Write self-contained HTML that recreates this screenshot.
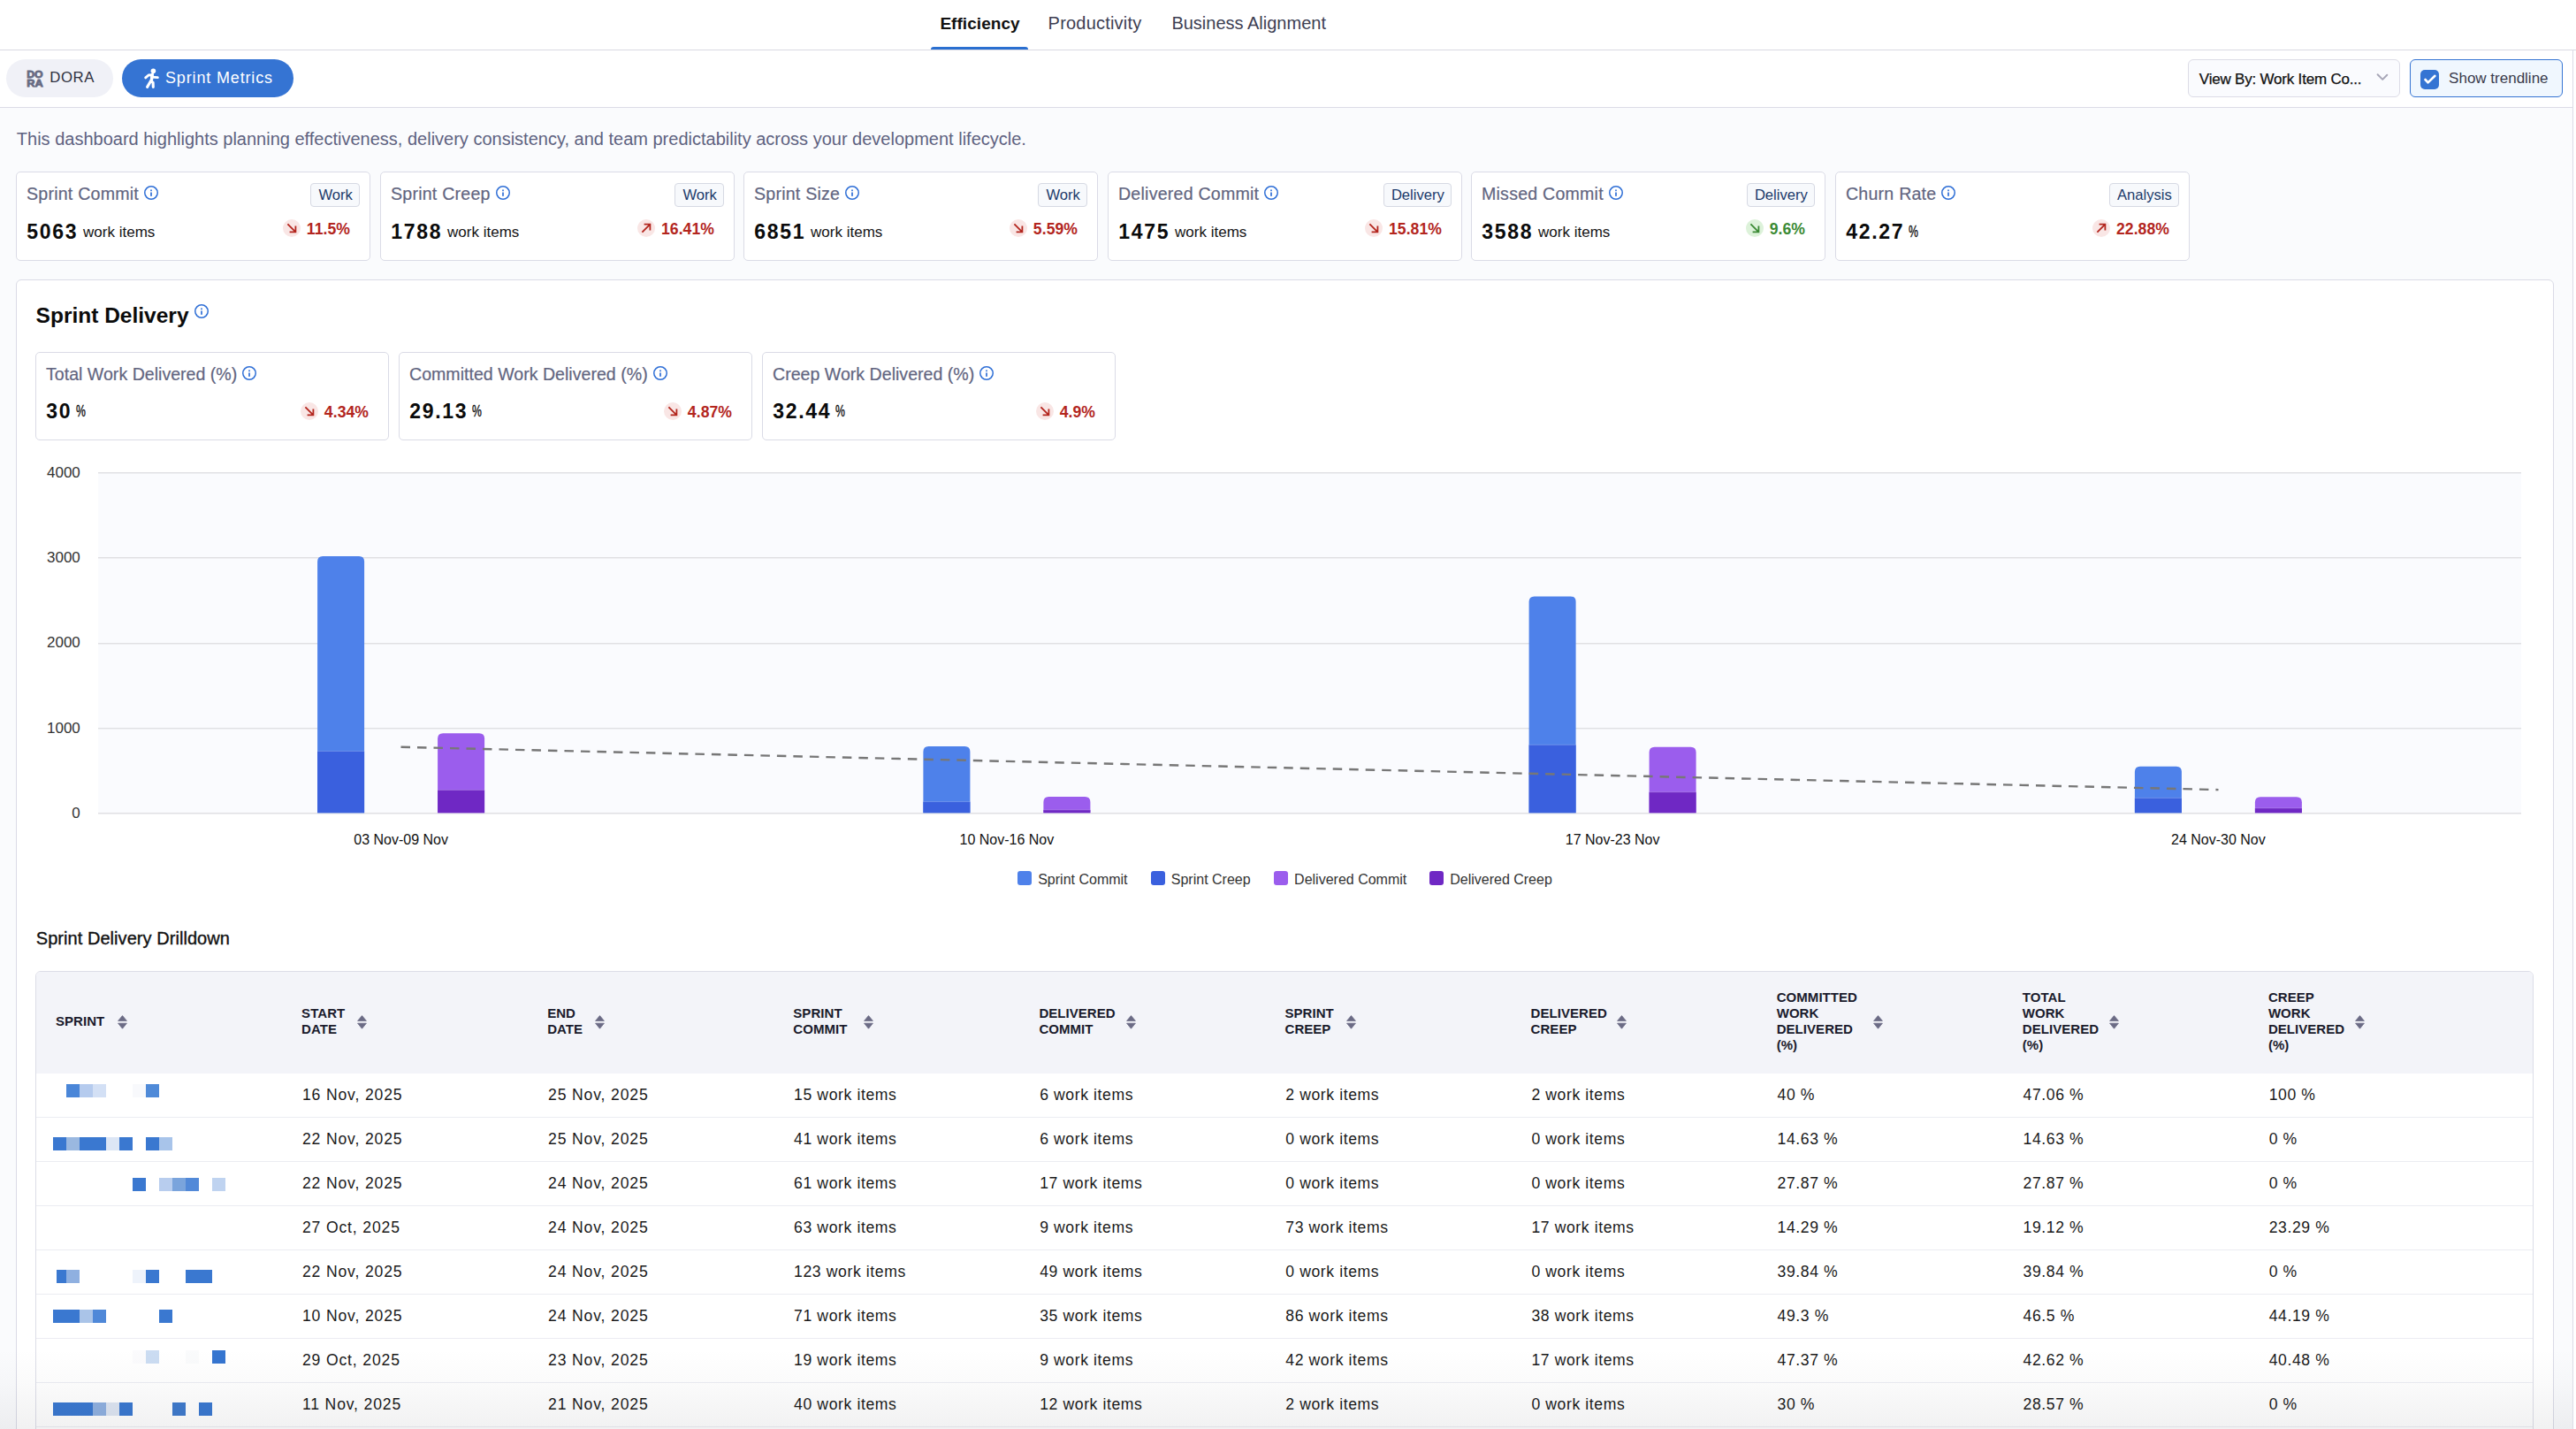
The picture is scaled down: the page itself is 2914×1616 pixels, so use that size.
<!DOCTYPE html>
<html><head><meta charset="utf-8"><style>
html,body{margin:0;padding:0;}
body{width:2914px;height:1616px;position:relative;overflow:hidden;background:#fafbfd;font-family:"Liberation Sans",sans-serif;}
.t{position:absolute;white-space:pre;}
.r{position:absolute;box-sizing:border-box;}
svg{position:absolute;overflow:visible;}
.ln{position:absolute;white-space:pre;}
.ln svg{position:relative;display:inline-block;vertical-align:baseline;}
</style></head><body>
<div class="r" style="left:0px;top:0px;width:2914px;height:56px;background:#fff"></div>
<div class="r" style="left:0px;top:56px;width:2914px;height:1px;background:#d9d9e3"></div>
<div class="t" style="left:1063.4px;top:17.2px;font-size:19px;line-height:19px;font-weight:700;color:#111111;letter-spacing:0.05px;">Efficiency</div>
<div class="t" style="left:1185.6px;top:16.4px;font-size:20px;line-height:20px;font-weight:400;color:#3d3e52;letter-spacing:0.2px;">Productivity</div>
<div class="t" style="left:1325.4px;top:16.4px;font-size:20px;line-height:20px;font-weight:400;color:#3d3e52;letter-spacing:0px;">Business Alignment</div>
<div class="r" style="left:1053px;top:53px;width:110px;height:3px;background:#2a6fd0;border-radius:3px 3px 0 0"></div>
<div class="r" style="left:0px;top:57px;width:2910px;height:64px;background:#fff"></div>
<div class="r" style="left:0px;top:121px;width:2910px;height:1px;background:#dcdce6"></div>
<div class="r" style="left:2910px;top:56px;width:1px;height:1560px;background:#dcdce6"></div>
<div class="r" style="left:2911px;top:57px;width:3px;height:1559px;background:#fff"></div>
<div class="r" style="left:7px;top:67px;width:121px;height:43px;background:#f0f1f7;border-radius:22px"></div>
<svg style="left:29px;top:78px" width="21" height="21" viewBox="0 0 21 21"><g font-family="Liberation Sans" font-weight="700" fill="#676a82" stroke="#676a82" stroke-width="0.8"><text x="1.2" y="10.2" font-size="11.5" textLength="18.5" lengthAdjust="spacingAndGlyphs">DO</text><text x="1.2" y="19.6" font-size="11" textLength="18.5" lengthAdjust="spacingAndGlyphs">RA</text></g></svg>
<div class="t" style="left:56.2px;top:79.8px;font-size:16.8px;line-height:16.8px;font-weight:400;color:#2f3040;letter-spacing:0.6px;">DORA</div>
<div class="r" style="left:138px;top:67px;width:194px;height:43px;background:#3574d3;border-radius:22px"></div>
<svg style="left:158px;top:74px" width="30" height="30" viewBox="0 0 30 30"><g fill="none" stroke="#fff" stroke-linecap="round" stroke-linejoin="round"><path d="M14.4 10.2 L13.1 18.4" stroke-width="3.4"/><path d="M14.2 10.6 L10 11 L6.7 13.9" stroke-width="2.9"/><path d="M13.6 13.2 L20.4 13.6" stroke-width="2.8"/><path d="M12.6 17.6 L8.6 24.4" stroke-width="3.1"/><path d="M13.2 18 L15.1 19.2 L15.3 24.4" stroke-width="3.1"/></g><circle cx="15.4" cy="6.3" r="2.8" fill="#fff"/></svg>
<div class="t" style="left:187.0px;top:78.8px;font-size:18px;line-height:18px;font-weight:400;color:#ffffff;letter-spacing:0.85px;">Sprint Metrics</div>
<div class="r" style="left:2475px;top:67px;width:240px;height:43px;background:#fafbfe;border:1px solid #dcdce6;border-radius:6px"></div>
<div class="t" style="left:2487.8px;top:81.1px;font-size:17px;line-height:17px;font-weight:400;color:#111111;letter-spacing:-0.2px;-webkit-text-stroke:0.25px #111">View By: Work Item Co...</div>
<svg style="left:2686px;top:80px" width="18" height="14" viewBox="0 0 18 14"><path d="M3.6 4.3 L9.2 9.9 L14.3 4.7" fill="none" stroke="#a8a7b8" stroke-width="2" stroke-linecap="round" stroke-linejoin="round"/></svg>
<div class="r" style="left:2726px;top:67px;width:173px;height:43px;background:#f0f7fe;border:1.5px solid #3574d3;border-radius:6px"></div>
<div class="r" style="left:2738px;top:79px;width:21px;height:22px;background:#3574d3;border-radius:5px"></div>
<svg style="left:2738px;top:79px" width="21" height="22" viewBox="0 0 21 22"><path d="M5.5 11 L8.6 14.4 L16.4 6.8" fill="none" stroke="#fff" stroke-width="2.6" stroke-linecap="round" stroke-linejoin="round"/></svg>
<div class="t" style="left:2770.1px;top:79.8px;font-size:17px;line-height:17px;font-weight:400;color:#3a3b4c;letter-spacing:0px;">Show trendline</div>
<div class="t" style="left:18.8px;top:147.3px;font-size:20px;line-height:20px;font-weight:400;color:#5e6280;letter-spacing:0px;">This dashboard highlights planning effectiveness, delivery consistency, and team predictability across your development lifecycle.</div>
<div class="r" style="left:18px;top:194px;width:401px;height:101px;background:#fff;border:1px solid #dadbe6;border-radius:5px"></div>
<div class="ln" style="left:30.0px;top:197.4px;font-size:19.6px;line-height:44px;"><span style="color:#62657f;letter-spacing:0.22px;-webkit-text-stroke:0.2px #62657f">Sprint Commit</span><svg style="margin-left:6px;vertical-align:0.2px" width="16" height="16" viewBox="0 0 16 16"><circle cx="8.0" cy="8.0" r="7.25" fill="none" stroke="#2f6fd6" stroke-width="1.5"/><rect x="7.15" y="7.52" width="1.7" height="4.32" fill="#2f6fd6"/><rect x="7.15" y="4.48" width="1.7" height="1.7" fill="#2f6fd6"/></svg></div>
<div class="ln" style="left:30.3px;top:240.0px;font-size:23px;line-height:44px;"><span style="font-weight:700;color:#0b0b0b;letter-spacing:1.7px">5063</span><span style="font-size:17px;color:#141414;margin-left:5.8px;position:relative;top:-2.2px">work items</span></div>
<div class="ln" style="right:2518.0px;top:236.5px;font-size:17.6px;line-height:44px;"><svg style="position:relative;display:inline-block;vertical-align:-3.6px;margin-right:7px" width="20" height="20" viewBox="0 0 20 20"><circle cx="10" cy="10" r="10" fill="#f9e6e5"/><path d="M5.4 5.4 L14.4 14.4 M7.6 14.4 L14.4 14.4 L14.4 7.6" fill="none" stroke="#b3261e" stroke-width="1.8"/></svg><span style="font-weight:700;color:#b3261e;letter-spacing:0.05px">11.5%</span></div>
<div class="t" style="right:2506.7px;top:207.4px;height:27px;box-sizing:border-box;padding:0 7.5px 0 8px;border:1px solid #d6d9e3;border-radius:4px;background:#f7f9fc;font-size:16.6px;line-height:26px;color:#1b3a6b">Work</div>
<div class="r" style="left:430px;top:194px;width:401px;height:101px;background:#fff;border:1px solid #dadbe6;border-radius:5px"></div>
<div class="ln" style="left:442.0px;top:197.4px;font-size:19.6px;line-height:44px;"><span style="color:#62657f;letter-spacing:0.22px;-webkit-text-stroke:0.2px #62657f">Sprint Creep</span><svg style="margin-left:6px;vertical-align:0.2px" width="16" height="16" viewBox="0 0 16 16"><circle cx="8.0" cy="8.0" r="7.25" fill="none" stroke="#2f6fd6" stroke-width="1.5"/><rect x="7.15" y="7.52" width="1.7" height="4.32" fill="#2f6fd6"/><rect x="7.15" y="4.48" width="1.7" height="1.7" fill="#2f6fd6"/></svg></div>
<div class="ln" style="left:442.3px;top:240.0px;font-size:23px;line-height:44px;"><span style="font-weight:700;color:#0b0b0b;letter-spacing:1.7px">1788</span><span style="font-size:17px;color:#141414;margin-left:5.8px;position:relative;top:-2.2px">work items</span></div>
<div class="ln" style="right:2106.0px;top:236.5px;font-size:17.6px;line-height:44px;"><svg style="position:relative;display:inline-block;vertical-align:-3.6px;margin-right:7px" width="20" height="20" viewBox="0 0 20 20"><circle cx="10" cy="10" r="10" fill="#f9e6e5"/><path d="M5.4 14.6 L14.4 5.6 M7.6 5.6 L14.4 5.6 L14.4 12.4" fill="none" stroke="#b3261e" stroke-width="1.8"/></svg><span style="font-weight:700;color:#b3261e;letter-spacing:0.05px">16.41%</span></div>
<div class="t" style="right:2094.7px;top:207.4px;height:27px;box-sizing:border-box;padding:0 7.5px 0 8px;border:1px solid #d6d9e3;border-radius:4px;background:#f7f9fc;font-size:16.6px;line-height:26px;color:#1b3a6b">Work</div>
<div class="r" style="left:841px;top:194px;width:401px;height:101px;background:#fff;border:1px solid #dadbe6;border-radius:5px"></div>
<div class="ln" style="left:853.0px;top:197.4px;font-size:19.6px;line-height:44px;"><span style="color:#62657f;letter-spacing:0.22px;-webkit-text-stroke:0.2px #62657f">Sprint Size</span><svg style="margin-left:6px;vertical-align:0.2px" width="16" height="16" viewBox="0 0 16 16"><circle cx="8.0" cy="8.0" r="7.25" fill="none" stroke="#2f6fd6" stroke-width="1.5"/><rect x="7.15" y="7.52" width="1.7" height="4.32" fill="#2f6fd6"/><rect x="7.15" y="4.48" width="1.7" height="1.7" fill="#2f6fd6"/></svg></div>
<div class="ln" style="left:853.3px;top:240.0px;font-size:23px;line-height:44px;"><span style="font-weight:700;color:#0b0b0b;letter-spacing:1.7px">6851</span><span style="font-size:17px;color:#141414;margin-left:5.8px;position:relative;top:-2.2px">work items</span></div>
<div class="ln" style="right:1695.0px;top:236.5px;font-size:17.6px;line-height:44px;"><svg style="position:relative;display:inline-block;vertical-align:-3.6px;margin-right:7px" width="20" height="20" viewBox="0 0 20 20"><circle cx="10" cy="10" r="10" fill="#f9e6e5"/><path d="M5.4 5.4 L14.4 14.4 M7.6 14.4 L14.4 14.4 L14.4 7.6" fill="none" stroke="#b3261e" stroke-width="1.8"/></svg><span style="font-weight:700;color:#b3261e;letter-spacing:0.05px">5.59%</span></div>
<div class="t" style="right:1683.7px;top:207.4px;height:27px;box-sizing:border-box;padding:0 7.5px 0 8px;border:1px solid #d6d9e3;border-radius:4px;background:#f7f9fc;font-size:16.6px;line-height:26px;color:#1b3a6b">Work</div>
<div class="r" style="left:1253px;top:194px;width:401px;height:101px;background:#fff;border:1px solid #dadbe6;border-radius:5px"></div>
<div class="ln" style="left:1265.0px;top:197.4px;font-size:19.6px;line-height:44px;"><span style="color:#62657f;letter-spacing:0.22px;-webkit-text-stroke:0.2px #62657f">Delivered Commit</span><svg style="margin-left:6px;vertical-align:0.2px" width="16" height="16" viewBox="0 0 16 16"><circle cx="8.0" cy="8.0" r="7.25" fill="none" stroke="#2f6fd6" stroke-width="1.5"/><rect x="7.15" y="7.52" width="1.7" height="4.32" fill="#2f6fd6"/><rect x="7.15" y="4.48" width="1.7" height="1.7" fill="#2f6fd6"/></svg></div>
<div class="ln" style="left:1265.3px;top:240.0px;font-size:23px;line-height:44px;"><span style="font-weight:700;color:#0b0b0b;letter-spacing:1.7px">1475</span><span style="font-size:17px;color:#141414;margin-left:5.8px;position:relative;top:-2.2px">work items</span></div>
<div class="ln" style="right:1283.0px;top:236.5px;font-size:17.6px;line-height:44px;"><svg style="position:relative;display:inline-block;vertical-align:-3.6px;margin-right:7px" width="20" height="20" viewBox="0 0 20 20"><circle cx="10" cy="10" r="10" fill="#f9e6e5"/><path d="M5.4 5.4 L14.4 14.4 M7.6 14.4 L14.4 14.4 L14.4 7.6" fill="none" stroke="#b3261e" stroke-width="1.8"/></svg><span style="font-weight:700;color:#b3261e;letter-spacing:0.05px">15.81%</span></div>
<div class="t" style="right:1271.7px;top:207.4px;height:27px;box-sizing:border-box;padding:0 7.5px 0 8px;border:1px solid #d6d9e3;border-radius:4px;background:#f7f9fc;font-size:16.6px;line-height:26px;color:#1b3a6b">Delivery</div>
<div class="r" style="left:1664px;top:194px;width:401px;height:101px;background:#fff;border:1px solid #dadbe6;border-radius:5px"></div>
<div class="ln" style="left:1676.0px;top:197.4px;font-size:19.6px;line-height:44px;"><span style="color:#62657f;letter-spacing:0.22px;-webkit-text-stroke:0.2px #62657f">Missed Commit</span><svg style="margin-left:6px;vertical-align:0.2px" width="16" height="16" viewBox="0 0 16 16"><circle cx="8.0" cy="8.0" r="7.25" fill="none" stroke="#2f6fd6" stroke-width="1.5"/><rect x="7.15" y="7.52" width="1.7" height="4.32" fill="#2f6fd6"/><rect x="7.15" y="4.48" width="1.7" height="1.7" fill="#2f6fd6"/></svg></div>
<div class="ln" style="left:1676.3px;top:240.0px;font-size:23px;line-height:44px;"><span style="font-weight:700;color:#0b0b0b;letter-spacing:1.7px">3588</span><span style="font-size:17px;color:#141414;margin-left:5.8px;position:relative;top:-2.2px">work items</span></div>
<div class="ln" style="right:872.0px;top:236.5px;font-size:17.6px;line-height:44px;"><svg style="position:relative;display:inline-block;vertical-align:-3.6px;margin-right:7px" width="20" height="20" viewBox="0 0 20 20"><circle cx="10" cy="10" r="10" fill="#ddf2da"/><path d="M5.4 5.4 L14.4 14.4 M7.6 14.4 L14.4 14.4 L14.4 7.6" fill="none" stroke="#3b8a34" stroke-width="1.8"/></svg><span style="font-weight:700;color:#3b8a34;letter-spacing:0.05px">9.6%</span></div>
<div class="t" style="right:860.7px;top:207.4px;height:27px;box-sizing:border-box;padding:0 7.5px 0 8px;border:1px solid #d6d9e3;border-radius:4px;background:#f7f9fc;font-size:16.6px;line-height:26px;color:#1b3a6b">Delivery</div>
<div class="r" style="left:2076px;top:194px;width:401px;height:101px;background:#fff;border:1px solid #dadbe6;border-radius:5px"></div>
<div class="ln" style="left:2088.0px;top:197.4px;font-size:19.6px;line-height:44px;"><span style="color:#62657f;letter-spacing:0.22px;-webkit-text-stroke:0.2px #62657f">Churn Rate</span><svg style="margin-left:6px;vertical-align:0.2px" width="16" height="16" viewBox="0 0 16 16"><circle cx="8.0" cy="8.0" r="7.25" fill="none" stroke="#2f6fd6" stroke-width="1.5"/><rect x="7.15" y="7.52" width="1.7" height="4.32" fill="#2f6fd6"/><rect x="7.15" y="4.48" width="1.7" height="1.7" fill="#2f6fd6"/></svg></div>
<div class="ln" style="left:2088.3px;top:240.0px;font-size:23px;line-height:44px;"><span style="font-weight:700;color:#0b0b0b;letter-spacing:1.7px">42.27</span><span style="display:inline-block;font-size:18px;color:#0b0b0b;margin-left:5px;margin-right:-6px;transform:scaleX(0.68);transform-origin:0 0;position:relative;top:-1.6px;-webkit-text-stroke:0.35px #0b0b0b">%</span></div>
<div class="ln" style="right:460.0px;top:236.5px;font-size:17.6px;line-height:44px;"><svg style="position:relative;display:inline-block;vertical-align:-3.6px;margin-right:7px" width="20" height="20" viewBox="0 0 20 20"><circle cx="10" cy="10" r="10" fill="#f9e6e5"/><path d="M5.4 14.6 L14.4 5.6 M7.6 5.6 L14.4 5.6 L14.4 12.4" fill="none" stroke="#b3261e" stroke-width="1.8"/></svg><span style="font-weight:700;color:#b3261e;letter-spacing:0.05px">22.88%</span></div>
<div class="t" style="right:448.7px;top:207.4px;height:27px;box-sizing:border-box;padding:0 7.5px 0 8px;border:1px solid #d6d9e3;border-radius:4px;background:#f7f9fc;font-size:16.6px;line-height:26px;color:#1b3a6b">Analysis</div>
<div class="r" style="left:18px;top:316px;width:2871px;height:1400px;background:#fff;border:1px solid #dadbe6;border-radius:6px"></div>
<div class="t" style="left:40.6px;top:345.4px;font-size:24.5px;line-height:24.5px;font-weight:700;color:#0b0b0b;letter-spacing:0px;">Sprint Delivery</div>
<svg style="left:220.2px;top:344px" width="16" height="16" viewBox="0 0 16 16"><circle cx="8.0" cy="8.0" r="7.25" fill="none" stroke="#2f6fd6" stroke-width="1.5"/><rect x="7.15" y="7.52" width="1.7" height="4.32" fill="#2f6fd6"/><rect x="7.15" y="4.48" width="1.7" height="1.7" fill="#2f6fd6"/></svg>
<div class="r" style="left:40px;top:398px;width:400px;height:100px;background:#fff;border:1px solid #dadbe6;border-radius:5px"></div>
<div class="ln" style="left:52.0px;top:401.2px;font-size:19.6px;line-height:44px;"><span style="color:#62657f;letter-spacing:0px;-webkit-text-stroke:0.2px #62657f">Total Work Delivered (%)</span><svg style="margin-left:6px;vertical-align:0.2px" width="16" height="16" viewBox="0 0 16 16"><circle cx="8.0" cy="8.0" r="7.25" fill="none" stroke="#2f6fd6" stroke-width="1.5"/><rect x="7.15" y="7.52" width="1.7" height="4.32" fill="#2f6fd6"/><rect x="7.15" y="4.48" width="1.7" height="1.7" fill="#2f6fd6"/></svg></div>
<div class="ln" style="left:52.3px;top:443.0px;font-size:23px;line-height:44px;"><span style="font-weight:700;color:#0b0b0b;letter-spacing:1.7px">30</span><span style="display:inline-block;font-size:18px;color:#0b0b0b;margin-left:5px;margin-right:-6px;transform:scaleX(0.68);transform-origin:0 0;position:relative;top:-1.6px;-webkit-text-stroke:0.35px #0b0b0b">%</span></div>
<div class="ln" style="right:2497.0px;top:443.6px;font-size:17.6px;line-height:44px;"><svg style="position:relative;display:inline-block;vertical-align:-3.6px;margin-right:7px" width="20" height="20" viewBox="0 0 20 20"><circle cx="10" cy="10" r="10" fill="#f9e6e5"/><path d="M5.4 5.4 L14.4 14.4 M7.6 14.4 L14.4 14.4 L14.4 7.6" fill="none" stroke="#b3261e" stroke-width="1.8"/></svg><span style="font-weight:700;color:#b3261e;letter-spacing:0.05px">4.34%</span></div>
<div class="r" style="left:451px;top:398px;width:400px;height:100px;background:#fff;border:1px solid #dadbe6;border-radius:5px"></div>
<div class="ln" style="left:463.0px;top:401.2px;font-size:19.6px;line-height:44px;"><span style="color:#62657f;letter-spacing:0px;-webkit-text-stroke:0.2px #62657f">Committed Work Delivered (%)</span><svg style="margin-left:6px;vertical-align:0.2px" width="16" height="16" viewBox="0 0 16 16"><circle cx="8.0" cy="8.0" r="7.25" fill="none" stroke="#2f6fd6" stroke-width="1.5"/><rect x="7.15" y="7.52" width="1.7" height="4.32" fill="#2f6fd6"/><rect x="7.15" y="4.48" width="1.7" height="1.7" fill="#2f6fd6"/></svg></div>
<div class="ln" style="left:463.3px;top:443.0px;font-size:23px;line-height:44px;"><span style="font-weight:700;color:#0b0b0b;letter-spacing:1.7px">29.13</span><span style="display:inline-block;font-size:18px;color:#0b0b0b;margin-left:5px;margin-right:-6px;transform:scaleX(0.68);transform-origin:0 0;position:relative;top:-1.6px;-webkit-text-stroke:0.35px #0b0b0b">%</span></div>
<div class="ln" style="right:2086.0px;top:443.6px;font-size:17.6px;line-height:44px;"><svg style="position:relative;display:inline-block;vertical-align:-3.6px;margin-right:7px" width="20" height="20" viewBox="0 0 20 20"><circle cx="10" cy="10" r="10" fill="#f9e6e5"/><path d="M5.4 5.4 L14.4 14.4 M7.6 14.4 L14.4 14.4 L14.4 7.6" fill="none" stroke="#b3261e" stroke-width="1.8"/></svg><span style="font-weight:700;color:#b3261e;letter-spacing:0.05px">4.87%</span></div>
<div class="r" style="left:862px;top:398px;width:400px;height:100px;background:#fff;border:1px solid #dadbe6;border-radius:5px"></div>
<div class="ln" style="left:874.0px;top:401.2px;font-size:19.6px;line-height:44px;"><span style="color:#62657f;letter-spacing:0px;-webkit-text-stroke:0.2px #62657f">Creep Work Delivered (%)</span><svg style="margin-left:6px;vertical-align:0.2px" width="16" height="16" viewBox="0 0 16 16"><circle cx="8.0" cy="8.0" r="7.25" fill="none" stroke="#2f6fd6" stroke-width="1.5"/><rect x="7.15" y="7.52" width="1.7" height="4.32" fill="#2f6fd6"/><rect x="7.15" y="4.48" width="1.7" height="1.7" fill="#2f6fd6"/></svg></div>
<div class="ln" style="left:874.3px;top:443.0px;font-size:23px;line-height:44px;"><span style="font-weight:700;color:#0b0b0b;letter-spacing:1.7px">32.44</span><span style="display:inline-block;font-size:18px;color:#0b0b0b;margin-left:5px;margin-right:-6px;transform:scaleX(0.68);transform-origin:0 0;position:relative;top:-1.6px;-webkit-text-stroke:0.35px #0b0b0b">%</span></div>
<div class="ln" style="right:1675.0px;top:443.6px;font-size:17.6px;line-height:44px;"><svg style="position:relative;display:inline-block;vertical-align:-3.6px;margin-right:7px" width="20" height="20" viewBox="0 0 20 20"><circle cx="10" cy="10" r="10" fill="#f9e6e5"/><path d="M5.4 5.4 L14.4 14.4 M7.6 14.4 L14.4 14.4 L14.4 7.6" fill="none" stroke="#b3261e" stroke-width="1.8"/></svg><span style="font-weight:700;color:#b3261e;letter-spacing:0.05px">4.9%</span></div>
<div class="r" style="left:111px;top:534px;width:2741px;height:386px;background:#fafbfe"></div>
<div class="r" style="left:111px;top:919px;width:2741px;height:1px;background:#e0e0e3"></div>
<div class="r" style="left:111px;top:920px;width:2741px;height:1px;background:#eeeff2"></div>
<div class="t" style="right:2823.2px;top:911.2px;font-size:17px;line-height:17px;font-weight:400;color:#333333;letter-spacing:0px;">0</div>
<div class="r" style="left:111px;top:823px;width:2741px;height:1px;background:#e0e0e3"></div>
<div class="r" style="left:111px;top:824px;width:2741px;height:1px;background:#eeeff2"></div>
<div class="t" style="right:2823.2px;top:814.8px;font-size:17px;line-height:17px;font-weight:400;color:#333333;letter-spacing:0px;">1000</div>
<div class="r" style="left:111px;top:727px;width:2741px;height:1px;background:#e0e0e3"></div>
<div class="r" style="left:111px;top:728px;width:2741px;height:1px;background:#eeeff2"></div>
<div class="t" style="right:2823.2px;top:718.4px;font-size:17px;line-height:17px;font-weight:400;color:#333333;letter-spacing:0px;">2000</div>
<div class="r" style="left:111px;top:630px;width:2741px;height:1px;background:#e0e0e3"></div>
<div class="r" style="left:111px;top:631px;width:2741px;height:1px;background:#eeeff2"></div>
<div class="t" style="right:2823.2px;top:621.9px;font-size:17px;line-height:17px;font-weight:400;color:#333333;letter-spacing:0px;">3000</div>
<div class="r" style="left:111px;top:534px;width:2741px;height:1px;background:#e0e0e3"></div>
<div class="r" style="left:111px;top:535px;width:2741px;height:1px;background:#eeeff2"></div>
<div class="t" style="right:2823.2px;top:525.5px;font-size:17px;line-height:17px;font-weight:400;color:#333333;letter-spacing:0px;">4000</div>
<div class="t" style="left:453.6px;top:941.9px;font-size:16px;line-height:16px;font-weight:400;color:#111111;letter-spacing:0px;transform:translateX(-50%)">03 Nov-09 Nov</div>
<div class="t" style="left:1138.9px;top:941.9px;font-size:16px;line-height:16px;font-weight:400;color:#111111;letter-spacing:0px;transform:translateX(-50%)">10 Nov-16 Nov</div>
<div class="t" style="left:1824.1px;top:941.9px;font-size:16px;line-height:16px;font-weight:400;color:#111111;letter-spacing:0px;transform:translateX(-50%)">17 Nov-23 Nov</div>
<div class="t" style="left:2509.4px;top:941.9px;font-size:16px;line-height:16px;font-weight:400;color:#111111;letter-spacing:0px;transform:translateX(-50%)">24 Nov-30 Nov</div>
<svg style="left:0;top:0" width="2914" height="1616"><path d="M359.1 919.2 L359.1 635.0 Q359.1 629.0 365.1 629.0 L406.1 629.0 Q412.1 629.0 412.1 635.0 L412.1 919.2 Z" fill="#4e81ea"/><rect x="359.1" y="849.4" width="53" height="69.8" fill="#3a60de"/><rect x="359.1" y="848.9" width="53" height="1" fill="#ffffff" fill-opacity="0.22"/><path d="M495.1 919.2 L495.1 835.2 Q495.1 829.2 501.1 829.2 L542.1 829.2 Q548.1 829.2 548.1 835.2 L548.1 919.2 Z" fill="#9b5ded"/><rect x="495.1" y="893.4" width="53" height="25.8" fill="#6f28c4"/><rect x="495.1" y="892.9" width="53" height="1" fill="#ffffff" fill-opacity="0.22"/><path d="M1044.4 919.2 L1044.4 850.0 Q1044.4 844.0 1050.4 844.0 L1091.4 844.0 Q1097.4 844.0 1097.4 850.0 L1097.4 919.2 Z" fill="#4e81ea"/><rect x="1044.4" y="906.6" width="53" height="12.6" fill="#3a60de"/><rect x="1044.4" y="906.1" width="53" height="1" fill="#ffffff" fill-opacity="0.22"/><path d="M1180.4 919.2 L1180.4 907.0 Q1180.4 901.0 1186.4 901.0 L1227.4 901.0 Q1233.4 901.0 1233.4 907.0 L1233.4 919.2 Z" fill="#9b5ded"/><rect x="1180.4" y="915.9" width="53" height="3.3" fill="#6f28c4"/><rect x="1180.4" y="915.4" width="53" height="1" fill="#ffffff" fill-opacity="0.22"/><path d="M1729.6 919.2 L1729.6 680.5 Q1729.6 674.5 1735.6 674.5 L1776.6 674.5 Q1782.6 674.5 1782.6 680.5 L1782.6 919.2 Z" fill="#4e81ea"/><rect x="1729.6" y="842.3" width="53" height="76.9" fill="#3a60de"/><rect x="1729.6" y="841.8" width="53" height="1" fill="#ffffff" fill-opacity="0.22"/><path d="M1865.6 919.2 L1865.6 850.7 Q1865.6 844.7 1871.6 844.7 L1912.6 844.7 Q1918.6 844.7 1918.6 850.7 L1918.6 919.2 Z" fill="#9b5ded"/><rect x="1865.6" y="895.7" width="53" height="23.5" fill="#6f28c4"/><rect x="1865.6" y="895.2" width="53" height="1" fill="#ffffff" fill-opacity="0.22"/><path d="M2414.9 919.2 L2414.9 872.8 Q2414.9 866.8 2420.9 866.8 L2461.9 866.8 Q2467.9 866.8 2467.9 872.8 L2467.9 919.2 Z" fill="#4e81ea"/><rect x="2414.9" y="902.4" width="53" height="16.8" fill="#3a60de"/><rect x="2414.9" y="901.9" width="53" height="1" fill="#ffffff" fill-opacity="0.22"/><path d="M2550.9 919.2 L2550.9 907.3 Q2550.9 901.3 2556.9 901.3 L2597.9 901.3 Q2603.9 901.3 2603.9 907.3 L2603.9 919.2 Z" fill="#9b5ded"/><rect x="2550.9" y="913.9" width="53" height="5.3" fill="#6f28c4"/><rect x="2550.9" y="913.4" width="53" height="1" fill="#ffffff" fill-opacity="0.22"/><line x1="453.5" y1="844.8" x2="2509.5" y2="893.1" stroke="#777" stroke-width="2.4" stroke-dasharray="10.5 8"/></svg>
<div class="r" style="left:1151px;top:985px;width:16px;height:16px;background:#4e81ea;border-radius:3px"></div>
<div class="t" style="left:1174.2px;top:987.1px;font-size:16px;line-height:16px;font-weight:400;color:#333333;letter-spacing:0px;">Sprint Commit</div>
<div class="r" style="left:1302px;top:985px;width:16px;height:16px;background:#3a60de;border-radius:3px"></div>
<div class="t" style="left:1324.8px;top:987.1px;font-size:16px;line-height:16px;font-weight:400;color:#333333;letter-spacing:0px;">Sprint Creep</div>
<div class="r" style="left:1441px;top:985px;width:16px;height:16px;background:#9b5ded;border-radius:3px"></div>
<div class="t" style="left:1464.1px;top:987.1px;font-size:16px;line-height:16px;font-weight:400;color:#333333;letter-spacing:0px;">Delivered Commit</div>
<div class="r" style="left:1617px;top:985px;width:16px;height:16px;background:#6f28c4;border-radius:3px"></div>
<div class="t" style="left:1640.2px;top:987.1px;font-size:16px;line-height:16px;font-weight:400;color:#333333;letter-spacing:0px;">Delivered Creep</div>
<div class="t" style="left:40.8px;top:1051.0px;font-size:20px;line-height:20px;font-weight:400;color:#111111;letter-spacing:0.05px;-webkit-text-stroke:0.35px #111">Sprint Delivery Drilldown</div>
<div class="r" style="left:40px;top:1098px;width:2826px;height:600px;background:#fff;border:1px solid #dcdde7;border-radius:6px 6px 0 0"></div>
<div class="r" style="left:41px;top:1099px;width:2824px;height:115px;background:#f3f4f9;border-radius:5px 5px 0 0"></div>
<div class="t" style="left:63.0px;top:1146.9px;font-size:15px;line-height:15px;font-weight:700;color:#1a1b2c;letter-spacing:0.05px;">SPRINT</div>
<svg style="left:132.6px;top:1148.0px" width="11" height="16" viewBox="0 0 11 16"><path d="M5.5 0.6 L10.4 6.4 L0.6 6.4 Z M0.6 9.2 L10.4 9.2 L5.5 15.2 Z" fill="#6b6b85" stroke="#6b6b85" stroke-width="0.8" stroke-linejoin="round"/></svg>
<div class="t" style="left:341.1px;top:1138.0px;font-size:15px;line-height:15px;font-weight:700;color:#1a1b2c;letter-spacing:0.05px;">START</div>
<div class="t" style="left:341.1px;top:1155.9px;font-size:15px;line-height:15px;font-weight:700;color:#1a1b2c;letter-spacing:0.05px;">DATE</div>
<svg style="left:404.3px;top:1148.0px" width="11" height="16" viewBox="0 0 11 16"><path d="M5.5 0.6 L10.4 6.4 L0.6 6.4 Z M0.6 9.2 L10.4 9.2 L5.5 15.2 Z" fill="#6b6b85" stroke="#6b6b85" stroke-width="0.8" stroke-linejoin="round"/></svg>
<div class="t" style="left:619.2px;top:1138.0px;font-size:15px;line-height:15px;font-weight:700;color:#1a1b2c;letter-spacing:0.05px;">END</div>
<div class="t" style="left:619.2px;top:1155.9px;font-size:15px;line-height:15px;font-weight:700;color:#1a1b2c;letter-spacing:0.05px;">DATE</div>
<svg style="left:673.4px;top:1148.0px" width="11" height="16" viewBox="0 0 11 16"><path d="M5.5 0.6 L10.4 6.4 L0.6 6.4 Z M0.6 9.2 L10.4 9.2 L5.5 15.2 Z" fill="#6b6b85" stroke="#6b6b85" stroke-width="0.8" stroke-linejoin="round"/></svg>
<div class="t" style="left:897.3px;top:1138.0px;font-size:15px;line-height:15px;font-weight:700;color:#1a1b2c;letter-spacing:0.05px;">SPRINT</div>
<div class="t" style="left:897.3px;top:1155.9px;font-size:15px;line-height:15px;font-weight:700;color:#1a1b2c;letter-spacing:0.05px;">COMMIT</div>
<svg style="left:977.0px;top:1148.0px" width="11" height="16" viewBox="0 0 11 16"><path d="M5.5 0.6 L10.4 6.4 L0.6 6.4 Z M0.6 9.2 L10.4 9.2 L5.5 15.2 Z" fill="#6b6b85" stroke="#6b6b85" stroke-width="0.8" stroke-linejoin="round"/></svg>
<div class="t" style="left:1175.4px;top:1138.0px;font-size:15px;line-height:15px;font-weight:700;color:#1a1b2c;letter-spacing:0.05px;">DELIVERED</div>
<div class="t" style="left:1175.4px;top:1155.9px;font-size:15px;line-height:15px;font-weight:700;color:#1a1b2c;letter-spacing:0.05px;">COMMIT</div>
<svg style="left:1273.8px;top:1148.0px" width="11" height="16" viewBox="0 0 11 16"><path d="M5.5 0.6 L10.4 6.4 L0.6 6.4 Z M0.6 9.2 L10.4 9.2 L5.5 15.2 Z" fill="#6b6b85" stroke="#6b6b85" stroke-width="0.8" stroke-linejoin="round"/></svg>
<div class="t" style="left:1453.5px;top:1138.0px;font-size:15px;line-height:15px;font-weight:700;color:#1a1b2c;letter-spacing:0.05px;">SPRINT</div>
<div class="t" style="left:1453.5px;top:1155.9px;font-size:15px;line-height:15px;font-weight:700;color:#1a1b2c;letter-spacing:0.05px;">CREEP</div>
<svg style="left:1523.3px;top:1148.0px" width="11" height="16" viewBox="0 0 11 16"><path d="M5.5 0.6 L10.4 6.4 L0.6 6.4 Z M0.6 9.2 L10.4 9.2 L5.5 15.2 Z" fill="#6b6b85" stroke="#6b6b85" stroke-width="0.8" stroke-linejoin="round"/></svg>
<div class="t" style="left:1731.6px;top:1138.0px;font-size:15px;line-height:15px;font-weight:700;color:#1a1b2c;letter-spacing:0.05px;">DELIVERED</div>
<div class="t" style="left:1731.6px;top:1155.9px;font-size:15px;line-height:15px;font-weight:700;color:#1a1b2c;letter-spacing:0.05px;">CREEP</div>
<svg style="left:1829.0px;top:1148.0px" width="11" height="16" viewBox="0 0 11 16"><path d="M5.5 0.6 L10.4 6.4 L0.6 6.4 Z M0.6 9.2 L10.4 9.2 L5.5 15.2 Z" fill="#6b6b85" stroke="#6b6b85" stroke-width="0.8" stroke-linejoin="round"/></svg>
<div class="t" style="left:2009.7px;top:1120.1px;font-size:15px;line-height:15px;font-weight:700;color:#1a1b2c;letter-spacing:0.05px;">COMMITTED</div>
<div class="t" style="left:2009.7px;top:1138.0px;font-size:15px;line-height:15px;font-weight:700;color:#1a1b2c;letter-spacing:0.05px;">WORK</div>
<div class="t" style="left:2009.7px;top:1155.9px;font-size:15px;line-height:15px;font-weight:700;color:#1a1b2c;letter-spacing:0.05px;">DELIVERED</div>
<div class="t" style="left:2009.7px;top:1173.8px;font-size:15px;line-height:15px;font-weight:700;color:#1a1b2c;letter-spacing:0.05px;">(%)</div>
<svg style="left:2119.0px;top:1148.0px" width="11" height="16" viewBox="0 0 11 16"><path d="M5.5 0.6 L10.4 6.4 L0.6 6.4 Z M0.6 9.2 L10.4 9.2 L5.5 15.2 Z" fill="#6b6b85" stroke="#6b6b85" stroke-width="0.8" stroke-linejoin="round"/></svg>
<div class="t" style="left:2287.8px;top:1120.1px;font-size:15px;line-height:15px;font-weight:700;color:#1a1b2c;letter-spacing:0.05px;">TOTAL</div>
<div class="t" style="left:2287.8px;top:1138.0px;font-size:15px;line-height:15px;font-weight:700;color:#1a1b2c;letter-spacing:0.05px;">WORK</div>
<div class="t" style="left:2287.8px;top:1155.9px;font-size:15px;line-height:15px;font-weight:700;color:#1a1b2c;letter-spacing:0.05px;">DELIVERED</div>
<div class="t" style="left:2287.8px;top:1173.8px;font-size:15px;line-height:15px;font-weight:700;color:#1a1b2c;letter-spacing:0.05px;">(%)</div>
<svg style="left:2386.0px;top:1148.0px" width="11" height="16" viewBox="0 0 11 16"><path d="M5.5 0.6 L10.4 6.4 L0.6 6.4 Z M0.6 9.2 L10.4 9.2 L5.5 15.2 Z" fill="#6b6b85" stroke="#6b6b85" stroke-width="0.8" stroke-linejoin="round"/></svg>
<div class="t" style="left:2565.9px;top:1120.1px;font-size:15px;line-height:15px;font-weight:700;color:#1a1b2c;letter-spacing:0.05px;">CREEP</div>
<div class="t" style="left:2565.9px;top:1138.0px;font-size:15px;line-height:15px;font-weight:700;color:#1a1b2c;letter-spacing:0.05px;">WORK</div>
<div class="t" style="left:2565.9px;top:1155.9px;font-size:15px;line-height:15px;font-weight:700;color:#1a1b2c;letter-spacing:0.05px;">DELIVERED</div>
<div class="t" style="left:2565.9px;top:1173.8px;font-size:15px;line-height:15px;font-weight:700;color:#1a1b2c;letter-spacing:0.05px;">(%)</div>
<svg style="left:2663.7px;top:1148.0px" width="11" height="16" viewBox="0 0 11 16"><path d="M5.5 0.6 L10.4 6.4 L0.6 6.4 Z M0.6 9.2 L10.4 9.2 L5.5 15.2 Z" fill="#6b6b85" stroke="#6b6b85" stroke-width="0.8" stroke-linejoin="round"/></svg>
<div class="r" style="left:41px;top:1263px;width:2824px;height:1px;background:#ebecf2"></div>
<div class="r" style="left:74.9px;top:1225.6px;width:15px;height:15px;background:#4a86d8"></div>
<div class="r" style="left:89.9px;top:1225.6px;width:15px;height:15px;background:#b5cbee"></div>
<div class="r" style="left:104.9px;top:1225.6px;width:15px;height:15px;background:#d3e0f5"></div>
<div class="r" style="left:149.9px;top:1225.6px;width:15px;height:15px;background:#f8f9fc"></div>
<div class="r" style="left:164.9px;top:1225.6px;width:15px;height:15px;background:#4f8ad8"></div>
<div class="t" style="left:341.9px;top:1230.1px;font-size:17.6px;line-height:17.6px;font-weight:400;color:#1a1a1a;letter-spacing:0.85px;">16 Nov, 2025</div>
<div class="t" style="left:620.0px;top:1230.1px;font-size:17.6px;line-height:17.6px;font-weight:400;color:#1a1a1a;letter-spacing:0.85px;">25 Nov, 2025</div>
<div class="t" style="left:898.1px;top:1230.1px;font-size:17.6px;line-height:17.6px;font-weight:400;color:#1a1a1a;letter-spacing:0.6px;">15 work items</div>
<div class="t" style="left:1176.2px;top:1230.1px;font-size:17.6px;line-height:17.6px;font-weight:400;color:#1a1a1a;letter-spacing:0.6px;">6 work items</div>
<div class="t" style="left:1454.3px;top:1230.1px;font-size:17.6px;line-height:17.6px;font-weight:400;color:#1a1a1a;letter-spacing:0.6px;">2 work items</div>
<div class="t" style="left:1732.4px;top:1230.1px;font-size:17.6px;line-height:17.6px;font-weight:400;color:#1a1a1a;letter-spacing:0.6px;">2 work items</div>
<div class="t" style="left:2010.5px;top:1230.1px;font-size:17.6px;line-height:17.6px;font-weight:400;color:#1a1a1a;letter-spacing:0.6px;">40 %</div>
<div class="t" style="left:2288.6px;top:1230.1px;font-size:17.6px;line-height:17.6px;font-weight:400;color:#1a1a1a;letter-spacing:0.6px;">47.06 %</div>
<div class="t" style="left:2566.7px;top:1230.1px;font-size:17.6px;line-height:17.6px;font-weight:400;color:#1a1a1a;letter-spacing:0.6px;">100 %</div>
<div class="r" style="left:41px;top:1313px;width:2824px;height:1px;background:#ebecf2"></div>
<div class="r" style="left:59.9px;top:1286.3px;width:15px;height:15px;background:#3a78d0"></div>
<div class="r" style="left:74.9px;top:1286.3px;width:15px;height:15px;background:#9ab8e0"></div>
<div class="r" style="left:89.9px;top:1286.3px;width:15px;height:15px;background:#3a78d0"></div>
<div class="r" style="left:104.9px;top:1286.3px;width:15px;height:15px;background:#3a78d0"></div>
<div class="r" style="left:119.9px;top:1286.3px;width:15px;height:15px;background:#dce6f5"></div>
<div class="r" style="left:134.9px;top:1286.3px;width:15px;height:15px;background:#3a78d0"></div>
<div class="r" style="left:164.9px;top:1286.3px;width:15px;height:15px;background:#3a78d0"></div>
<div class="r" style="left:179.9px;top:1286.3px;width:15px;height:15px;background:#a8c4ea"></div>
<div class="t" style="left:341.9px;top:1280.1px;font-size:17.6px;line-height:17.6px;font-weight:400;color:#1a1a1a;letter-spacing:0.85px;">22 Nov, 2025</div>
<div class="t" style="left:620.0px;top:1280.1px;font-size:17.6px;line-height:17.6px;font-weight:400;color:#1a1a1a;letter-spacing:0.85px;">25 Nov, 2025</div>
<div class="t" style="left:898.1px;top:1280.1px;font-size:17.6px;line-height:17.6px;font-weight:400;color:#1a1a1a;letter-spacing:0.6px;">41 work items</div>
<div class="t" style="left:1176.2px;top:1280.1px;font-size:17.6px;line-height:17.6px;font-weight:400;color:#1a1a1a;letter-spacing:0.6px;">6 work items</div>
<div class="t" style="left:1454.3px;top:1280.1px;font-size:17.6px;line-height:17.6px;font-weight:400;color:#1a1a1a;letter-spacing:0.6px;">0 work items</div>
<div class="t" style="left:1732.4px;top:1280.1px;font-size:17.6px;line-height:17.6px;font-weight:400;color:#1a1a1a;letter-spacing:0.6px;">0 work items</div>
<div class="t" style="left:2010.5px;top:1280.1px;font-size:17.6px;line-height:17.6px;font-weight:400;color:#1a1a1a;letter-spacing:0.6px;">14.63 %</div>
<div class="t" style="left:2288.6px;top:1280.1px;font-size:17.6px;line-height:17.6px;font-weight:400;color:#1a1a1a;letter-spacing:0.6px;">14.63 %</div>
<div class="t" style="left:2566.7px;top:1280.1px;font-size:17.6px;line-height:17.6px;font-weight:400;color:#1a1a1a;letter-spacing:0.6px;">0 %</div>
<div class="r" style="left:41px;top:1363px;width:2824px;height:1px;background:#ebecf2"></div>
<div class="r" style="left:149.9px;top:1331.6px;width:15px;height:15px;background:#3a78d0"></div>
<div class="r" style="left:179.9px;top:1331.6px;width:15px;height:15px;background:#b8cdee"></div>
<div class="r" style="left:194.9px;top:1331.6px;width:15px;height:15px;background:#7aa4dc"></div>
<div class="r" style="left:209.9px;top:1331.6px;width:15px;height:15px;background:#5289d8"></div>
<div class="r" style="left:239.9px;top:1331.6px;width:15px;height:15px;background:#bfd3f0"></div>
<div class="t" style="left:341.9px;top:1330.1px;font-size:17.6px;line-height:17.6px;font-weight:400;color:#1a1a1a;letter-spacing:0.85px;">22 Nov, 2025</div>
<div class="t" style="left:620.0px;top:1330.1px;font-size:17.6px;line-height:17.6px;font-weight:400;color:#1a1a1a;letter-spacing:0.85px;">24 Nov, 2025</div>
<div class="t" style="left:898.1px;top:1330.1px;font-size:17.6px;line-height:17.6px;font-weight:400;color:#1a1a1a;letter-spacing:0.6px;">61 work items</div>
<div class="t" style="left:1176.2px;top:1330.1px;font-size:17.6px;line-height:17.6px;font-weight:400;color:#1a1a1a;letter-spacing:0.6px;">17 work items</div>
<div class="t" style="left:1454.3px;top:1330.1px;font-size:17.6px;line-height:17.6px;font-weight:400;color:#1a1a1a;letter-spacing:0.6px;">0 work items</div>
<div class="t" style="left:1732.4px;top:1330.1px;font-size:17.6px;line-height:17.6px;font-weight:400;color:#1a1a1a;letter-spacing:0.6px;">0 work items</div>
<div class="t" style="left:2010.5px;top:1330.1px;font-size:17.6px;line-height:17.6px;font-weight:400;color:#1a1a1a;letter-spacing:0.6px;">27.87 %</div>
<div class="t" style="left:2288.6px;top:1330.1px;font-size:17.6px;line-height:17.6px;font-weight:400;color:#1a1a1a;letter-spacing:0.6px;">27.87 %</div>
<div class="t" style="left:2566.7px;top:1330.1px;font-size:17.6px;line-height:17.6px;font-weight:400;color:#1a1a1a;letter-spacing:0.6px;">0 %</div>
<div class="r" style="left:41px;top:1413px;width:2824px;height:1px;background:#ebecf2"></div>
<div class="t" style="left:341.9px;top:1380.1px;font-size:17.6px;line-height:17.6px;font-weight:400;color:#1a1a1a;letter-spacing:0.85px;">27 Oct, 2025</div>
<div class="t" style="left:620.0px;top:1380.1px;font-size:17.6px;line-height:17.6px;font-weight:400;color:#1a1a1a;letter-spacing:0.85px;">24 Nov, 2025</div>
<div class="t" style="left:898.1px;top:1380.1px;font-size:17.6px;line-height:17.6px;font-weight:400;color:#1a1a1a;letter-spacing:0.6px;">63 work items</div>
<div class="t" style="left:1176.2px;top:1380.1px;font-size:17.6px;line-height:17.6px;font-weight:400;color:#1a1a1a;letter-spacing:0.6px;">9 work items</div>
<div class="t" style="left:1454.3px;top:1380.1px;font-size:17.6px;line-height:17.6px;font-weight:400;color:#1a1a1a;letter-spacing:0.6px;">73 work items</div>
<div class="t" style="left:1732.4px;top:1380.1px;font-size:17.6px;line-height:17.6px;font-weight:400;color:#1a1a1a;letter-spacing:0.6px;">17 work items</div>
<div class="t" style="left:2010.5px;top:1380.1px;font-size:17.6px;line-height:17.6px;font-weight:400;color:#1a1a1a;letter-spacing:0.6px;">14.29 %</div>
<div class="t" style="left:2288.6px;top:1380.1px;font-size:17.6px;line-height:17.6px;font-weight:400;color:#1a1a1a;letter-spacing:0.6px;">19.12 %</div>
<div class="t" style="left:2566.7px;top:1380.1px;font-size:17.6px;line-height:17.6px;font-weight:400;color:#1a1a1a;letter-spacing:0.6px;">23.29 %</div>
<div class="r" style="left:41px;top:1463px;width:2824px;height:1px;background:#ebecf2"></div>
<div class="r" style="left:64.0px;top:1436.2px;width:10.9px;height:15px;background:#3a78d0"></div>
<div class="r" style="left:74.9px;top:1436.2px;width:15px;height:15px;background:#8fb0e0"></div>
<div class="r" style="left:149.9px;top:1436.2px;width:15px;height:15px;background:#eef3fb"></div>
<div class="r" style="left:164.9px;top:1436.2px;width:15px;height:15px;background:#3a78d0"></div>
<div class="r" style="left:209.9px;top:1436.2px;width:15px;height:15px;background:#3a78d0"></div>
<div class="r" style="left:224.9px;top:1436.2px;width:15px;height:15px;background:#3a78d0"></div>
<div class="t" style="left:341.9px;top:1430.1px;font-size:17.6px;line-height:17.6px;font-weight:400;color:#1a1a1a;letter-spacing:0.85px;">22 Nov, 2025</div>
<div class="t" style="left:620.0px;top:1430.1px;font-size:17.6px;line-height:17.6px;font-weight:400;color:#1a1a1a;letter-spacing:0.85px;">24 Nov, 2025</div>
<div class="t" style="left:898.1px;top:1430.1px;font-size:17.6px;line-height:17.6px;font-weight:400;color:#1a1a1a;letter-spacing:0.6px;">123 work items</div>
<div class="t" style="left:1176.2px;top:1430.1px;font-size:17.6px;line-height:17.6px;font-weight:400;color:#1a1a1a;letter-spacing:0.6px;">49 work items</div>
<div class="t" style="left:1454.3px;top:1430.1px;font-size:17.6px;line-height:17.6px;font-weight:400;color:#1a1a1a;letter-spacing:0.6px;">0 work items</div>
<div class="t" style="left:1732.4px;top:1430.1px;font-size:17.6px;line-height:17.6px;font-weight:400;color:#1a1a1a;letter-spacing:0.6px;">0 work items</div>
<div class="t" style="left:2010.5px;top:1430.1px;font-size:17.6px;line-height:17.6px;font-weight:400;color:#1a1a1a;letter-spacing:0.6px;">39.84 %</div>
<div class="t" style="left:2288.6px;top:1430.1px;font-size:17.6px;line-height:17.6px;font-weight:400;color:#1a1a1a;letter-spacing:0.6px;">39.84 %</div>
<div class="t" style="left:2566.7px;top:1430.1px;font-size:17.6px;line-height:17.6px;font-weight:400;color:#1a1a1a;letter-spacing:0.6px;">0 %</div>
<div class="r" style="left:41px;top:1513px;width:2824px;height:1px;background:#ebecf2"></div>
<div class="r" style="left:59.9px;top:1481.3px;width:15px;height:15px;background:#3a78d0"></div>
<div class="r" style="left:74.9px;top:1481.3px;width:15px;height:15px;background:#3a78d0"></div>
<div class="r" style="left:89.9px;top:1481.3px;width:15px;height:15px;background:#aac4e8"></div>
<div class="r" style="left:104.9px;top:1481.3px;width:15px;height:15px;background:#4f88d8"></div>
<div class="r" style="left:179.9px;top:1481.3px;width:15px;height:15px;background:#3a78d0"></div>
<div class="t" style="left:341.9px;top:1480.1px;font-size:17.6px;line-height:17.6px;font-weight:400;color:#1a1a1a;letter-spacing:0.85px;">10 Nov, 2025</div>
<div class="t" style="left:620.0px;top:1480.1px;font-size:17.6px;line-height:17.6px;font-weight:400;color:#1a1a1a;letter-spacing:0.85px;">24 Nov, 2025</div>
<div class="t" style="left:898.1px;top:1480.1px;font-size:17.6px;line-height:17.6px;font-weight:400;color:#1a1a1a;letter-spacing:0.6px;">71 work items</div>
<div class="t" style="left:1176.2px;top:1480.1px;font-size:17.6px;line-height:17.6px;font-weight:400;color:#1a1a1a;letter-spacing:0.6px;">35 work items</div>
<div class="t" style="left:1454.3px;top:1480.1px;font-size:17.6px;line-height:17.6px;font-weight:400;color:#1a1a1a;letter-spacing:0.6px;">86 work items</div>
<div class="t" style="left:1732.4px;top:1480.1px;font-size:17.6px;line-height:17.6px;font-weight:400;color:#1a1a1a;letter-spacing:0.6px;">38 work items</div>
<div class="t" style="left:2010.5px;top:1480.1px;font-size:17.6px;line-height:17.6px;font-weight:400;color:#1a1a1a;letter-spacing:0.6px;">49.3 %</div>
<div class="t" style="left:2288.6px;top:1480.1px;font-size:17.6px;line-height:17.6px;font-weight:400;color:#1a1a1a;letter-spacing:0.6px;">46.5 %</div>
<div class="t" style="left:2566.7px;top:1480.1px;font-size:17.6px;line-height:17.6px;font-weight:400;color:#1a1a1a;letter-spacing:0.6px;">44.19 %</div>
<div class="r" style="left:41px;top:1563px;width:2824px;height:1px;background:#ebecf2"></div>
<div class="r" style="left:149.9px;top:1526.6px;width:15px;height:15px;background:#fbfbfd"></div>
<div class="r" style="left:164.9px;top:1526.6px;width:15px;height:15px;background:#cbdcf2"></div>
<div class="r" style="left:209.9px;top:1526.6px;width:15px;height:15px;background:#fafbfc"></div>
<div class="r" style="left:239.9px;top:1526.6px;width:15px;height:15px;background:#3575d0"></div>
<div class="t" style="left:341.9px;top:1530.1px;font-size:17.6px;line-height:17.6px;font-weight:400;color:#1a1a1a;letter-spacing:0.85px;">29 Oct, 2025</div>
<div class="t" style="left:620.0px;top:1530.1px;font-size:17.6px;line-height:17.6px;font-weight:400;color:#1a1a1a;letter-spacing:0.85px;">23 Nov, 2025</div>
<div class="t" style="left:898.1px;top:1530.1px;font-size:17.6px;line-height:17.6px;font-weight:400;color:#1a1a1a;letter-spacing:0.6px;">19 work items</div>
<div class="t" style="left:1176.2px;top:1530.1px;font-size:17.6px;line-height:17.6px;font-weight:400;color:#1a1a1a;letter-spacing:0.6px;">9 work items</div>
<div class="t" style="left:1454.3px;top:1530.1px;font-size:17.6px;line-height:17.6px;font-weight:400;color:#1a1a1a;letter-spacing:0.6px;">42 work items</div>
<div class="t" style="left:1732.4px;top:1530.1px;font-size:17.6px;line-height:17.6px;font-weight:400;color:#1a1a1a;letter-spacing:0.6px;">17 work items</div>
<div class="t" style="left:2010.5px;top:1530.1px;font-size:17.6px;line-height:17.6px;font-weight:400;color:#1a1a1a;letter-spacing:0.6px;">47.37 %</div>
<div class="t" style="left:2288.6px;top:1530.1px;font-size:17.6px;line-height:17.6px;font-weight:400;color:#1a1a1a;letter-spacing:0.6px;">42.62 %</div>
<div class="t" style="left:2566.7px;top:1530.1px;font-size:17.6px;line-height:17.6px;font-weight:400;color:#1a1a1a;letter-spacing:0.6px;">40.48 %</div>
<div class="r" style="left:41px;top:1613px;width:2824px;height:1px;background:#ebecf2"></div>
<div class="r" style="left:59.9px;top:1586.4px;width:15px;height:15px;background:#3a78d0"></div>
<div class="r" style="left:74.9px;top:1586.4px;width:15px;height:15px;background:#3a78d0"></div>
<div class="r" style="left:89.9px;top:1586.4px;width:15px;height:15px;background:#3a78d0"></div>
<div class="r" style="left:104.9px;top:1586.4px;width:15px;height:15px;background:#8fb0e0"></div>
<div class="r" style="left:119.9px;top:1586.4px;width:15px;height:15px;background:#dde5f2"></div>
<div class="r" style="left:134.9px;top:1586.4px;width:15px;height:15px;background:#3a78d0"></div>
<div class="r" style="left:194.9px;top:1586.4px;width:15px;height:15px;background:#3f7acc"></div>
<div class="r" style="left:224.9px;top:1586.4px;width:15px;height:15px;background:#3a78d0"></div>
<div class="t" style="left:341.9px;top:1580.1px;font-size:17.6px;line-height:17.6px;font-weight:400;color:#1a1a1a;letter-spacing:0.85px;">11 Nov, 2025</div>
<div class="t" style="left:620.0px;top:1580.1px;font-size:17.6px;line-height:17.6px;font-weight:400;color:#1a1a1a;letter-spacing:0.85px;">21 Nov, 2025</div>
<div class="t" style="left:898.1px;top:1580.1px;font-size:17.6px;line-height:17.6px;font-weight:400;color:#1a1a1a;letter-spacing:0.6px;">40 work items</div>
<div class="t" style="left:1176.2px;top:1580.1px;font-size:17.6px;line-height:17.6px;font-weight:400;color:#1a1a1a;letter-spacing:0.6px;">12 work items</div>
<div class="t" style="left:1454.3px;top:1580.1px;font-size:17.6px;line-height:17.6px;font-weight:400;color:#1a1a1a;letter-spacing:0.6px;">2 work items</div>
<div class="t" style="left:1732.4px;top:1580.1px;font-size:17.6px;line-height:17.6px;font-weight:400;color:#1a1a1a;letter-spacing:0.6px;">0 work items</div>
<div class="t" style="left:2010.5px;top:1580.1px;font-size:17.6px;line-height:17.6px;font-weight:400;color:#1a1a1a;letter-spacing:0.6px;">30 %</div>
<div class="t" style="left:2288.6px;top:1580.1px;font-size:17.6px;line-height:17.6px;font-weight:400;color:#1a1a1a;letter-spacing:0.6px;">28.57 %</div>
<div class="t" style="left:2566.7px;top:1580.1px;font-size:17.6px;line-height:17.6px;font-weight:400;color:#1a1a1a;letter-spacing:0.6px;">0 %</div>
<div class="r" style="left:0px;top:1525px;width:2910px;height:91px;background:linear-gradient(to bottom, rgba(20,20,30,0) 0%, rgba(20,20,30,0.018) 45%, rgba(20,20,30,0.058) 100%)"></div>
</body></html>
